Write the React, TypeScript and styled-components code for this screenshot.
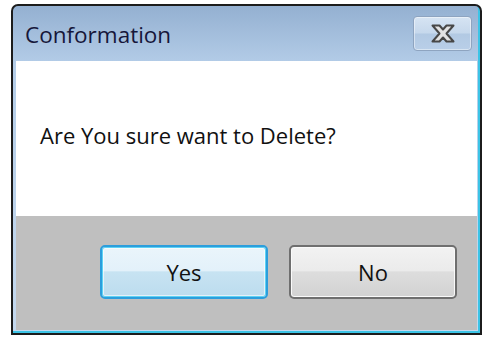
import React from "react";
import styled, { createGlobalStyle } from "styled-components";

const Global = createGlobalStyle`
  html, body { margin: 0; padding: 0; background: #ffffff; }
  body { font-family: "Open Sans", "Noto Sans", sans-serif; }
`;

const Page = styled.div`
  width: 496px;
  height: 341px;
  padding: 4px 0 0 11px;
  box-sizing: border-box;
`;

const Window = styled.div`
  width: 471px;
  height: 331px;
  box-sizing: border-box;
  border: 2px solid #1c1c1c;
  border-radius: 7px 7px 0 0;
  padding: 0 3px 3px 3px;
  background: linear-gradient(to bottom, #94b0d1 0%, #b4cde8 18%, #c4d8ee 100%);
  box-shadow: inset -2px -2px 0 #3cc4e6;
  display: flex;
  flex-direction: column;
`;

const TitleBar = styled.div`
  height: 55px;
  display: flex;
  align-items: center;
  justify-content: space-between;
  padding: 2px 5px 0 9px;
  box-sizing: border-box;
`;

const Title = styled.span`
  font-size: 22.5px;
  color: #16163a;
`;

const CloseButton = styled.div`
  width: 59px;
  height: 35px;
  box-sizing: border-box;
  margin-top: -2px;
  border: 1px solid #8ea4c0;
  border-radius: 4px;
  background: linear-gradient(to bottom, #d6e4f3 0%, #c6d8ec 48%, #b2c9e3 52%, #b9cfe8 100%);
  box-shadow: inset 0 0 0 1px rgba(255, 255, 255, 0.45);
  display: flex;
  align-items: center;
  justify-content: center;
`;

const Content = styled.div`
  height: 155px;
  background: #ffffff;
  display: flex;
  align-items: center;
  padding: 0 0 8px 24px;
  box-sizing: border-box;
`;

const Message = styled.span`
  font-size: 22px;
  color: #111111;
`;

const Footer = styled.div`
  flex: 1;
  background: #bfbfbf;
  display: flex;
  justify-content: flex-end;
  align-items: flex-start;
  gap: 21px;
  padding: 29px 20px 0 0;
`;

const Button = styled.button<{ $default?: boolean }>`
  width: 168px;
  height: 54px;
  box-sizing: border-box;
  font-family: "Open Sans", "Noto Sans", sans-serif;
  font-size: 22px;
  color: #111111;
  border-radius: 5px;
  border: ${(p) => (p.$default ? "2px solid #2c9edc" : "2px solid #6f6f6f")};
  background: ${(p) =>
    p.$default
      ? "linear-gradient(to bottom, #eaf5fb 0%, #e3f1fa 47%, #c7e3f2 50%, #bcdcee 100%)"
      : "linear-gradient(to bottom, #f2f2f2 0%, #ebebeb 47%, #dddddd 50%, #d2d2d2 100%)"};
  box-shadow: ${(p) =>
    p.$default
      ? "inset 0 0 0 1px #5ed2f4, inset 0 0 0 2px rgba(255,255,255,0.6)"
      : "inset 0 0 0 1px #fafafa"};
  display: flex;
  align-items: center;
  justify-content: center;
  padding: 0;
`;

const CloseGlyph = () => (
  <svg width="24" height="19" viewBox="0 0 24 19">
    <polygon
      points="1.5,1.5 8.5,1.5 12,5.5 15.5,1.5 22.5,1.5 15.5,9.5 22.5,17.5 15.5,17.5 12,13.5 8.5,17.5 1.5,17.5 8.5,9.5"
      fill="#e2e2e2"
      stroke="#474747"
      strokeWidth="2"
      strokeLinejoin="round"
    />
  </svg>
);

export default function App() {
  return (
    <>
      <Global />
      <Page>
        <Window>
          <TitleBar>
            <Title>Conformation</Title>
            <CloseButton>
              <CloseGlyph />
            </CloseButton>
          </TitleBar>
          <Content>
            <Message>Are You sure want to Delete?</Message>
          </Content>
          <Footer>
            <Button $default>Yes</Button>
            <Button>No</Button>
          </Footer>
        </Window>
      </Page>
    </>
  );
}
